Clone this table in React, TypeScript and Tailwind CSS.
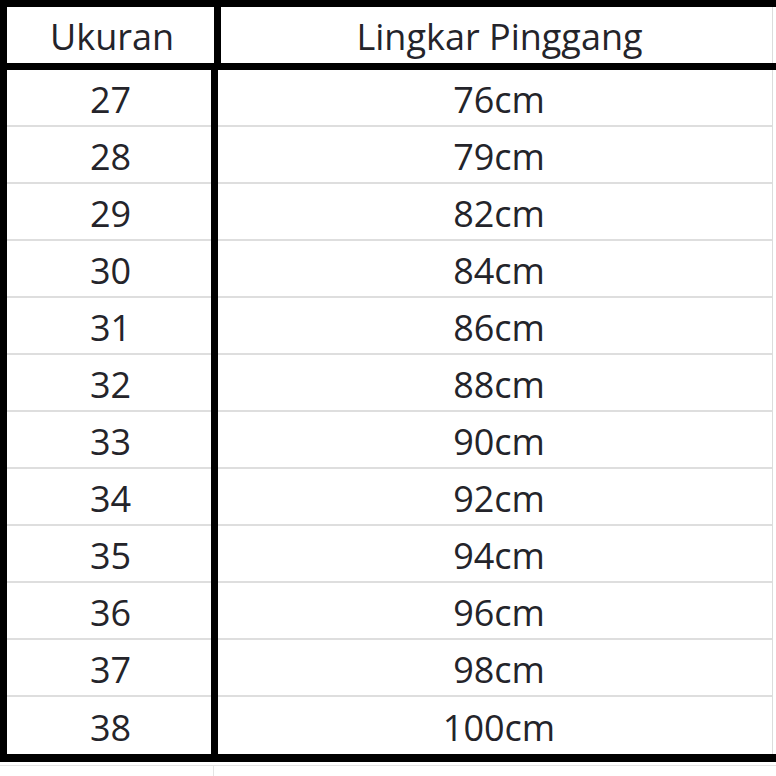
import React from "react";

const rows: [string, string][] = [
  ["27", "76cm"],
  ["28", "79cm"],
  ["29", "82cm"],
  ["30", "84cm"],
  ["31", "86cm"],
  ["32", "88cm"],
  ["33", "90cm"],
  ["34", "92cm"],
  ["35", "94cm"],
  ["36", "96cm"],
  ["37", "98cm"],
  ["38", "100cm"],
];

export default function App() {
  return (
    <div
      className="w-[776px] h-[776px] bg-white overflow-hidden text-[#24242a] font-medium"
      style={{ fontFamily: '"Open Sans", "Noto Sans", sans-serif' }}
    >
      <div className="border-l-[7px] border-t-[7px] border-b-[8px] border-black">
        {/* Header */}
        <div className="flex h-[63px] border-b-[7px] border-black">
          <div className="w-[204px] border-r-[7px] box-content border-black flex items-center justify-center text-[36px] leading-none pt-[3px] pl-[3px]">
            Ukuran
          </div>
          <div className="flex-1 flex items-center justify-center text-[36px] leading-none pt-[3px] pl-[6px] border-r border-[#dcdcdc] mr-[3px]">
            Lingkar Pinggang
          </div>
        </div>

        {/* Rows */}
        {rows.map(([size, waist], i) => (
          <div key={size} className="flex h-[57px]">
            <div className="w-[204px] border-r-[7px] box-content border-black">
              <div
                className={
                  "h-full flex items-center justify-center text-[36px] leading-none pt-[5px] pl-[3px] " +
                  (i < rows.length - 1 ? "border-b-2 border-[#dedede]" : "")
                }
              >
                {size}
              </div>
            </div>
            <div className="flex-1 border-r border-[#dcdcdc] mr-[3px]">
              <div
                className={
                  "h-full flex items-center justify-center text-[36px] leading-none pt-[5px] pl-[8px] " +
                  (i < rows.length - 1 ? "border-b-2 border-[#dedede]" : "")
                }
              >
                {waist}
              </div>
            </div>
          </div>
        ))}
      </div>

      {/* Next row peeking below */}
      <div className="flex h-[20px] pt-[3px]">
        <div className="w-[213px] border-t border-[#e4e4e4]" />
        <div className="flex-1 border-t border-l border-[#e4e4e4]" />
      </div>
    </div>
  );
}
